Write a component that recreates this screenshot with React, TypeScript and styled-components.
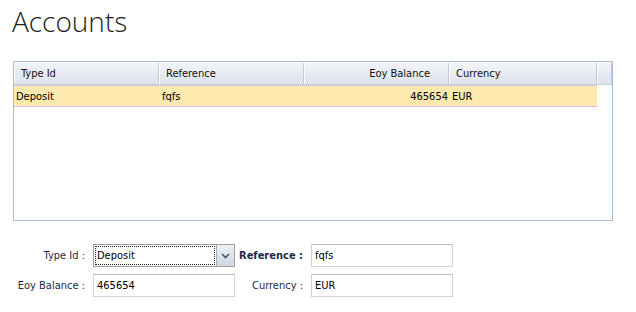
import React from "react";
import styled, { createGlobalStyle } from "styled-components";

const Global = createGlobalStyle`
  html, body { margin: 0; padding: 0; background: #fff; }
  body { font-family: "DejaVu Sans Condensed", "Liberation Sans", Arial, sans-serif; font-stretch: condensed; font-size: 11px; color: #000; }
`;

const Page = styled.div`
  width: 636px;
  height: 312px;
  padding: 0 0 0 13px;
  box-sizing: border-box;
`;

const Title = styled.h1`
  margin: 0;
  padding: 3px 0 0 0;
  margin-left: -1px;
  height: 61px;
  box-sizing: border-box;
  font-family: "Open Sans", sans-serif;
  font-stretch: normal;
  font-weight: 300;
  font-size: 28px;
  line-height: 36px;
  color: #222;
`;

const Grid = styled.div`
  width: 600px;
  height: 160px;
  box-sizing: border-box;
  border: 1px solid #a9bcd7;
  display: flex;
  flex-direction: column;
`;

const HeaderRow = styled.div`
  display: flex;
  height: 23px;
  border-top: 1px solid #fff;
  box-sizing: border-box;
`;

const HeadCell = styled.div<{ $w: number; $right?: boolean }>`
  flex: 0 0 ${(p) => p.$w}px;
  width: ${(p) => p.$w}px;
  box-sizing: border-box;
  padding: 0 ${(p) => (p.$right ? 18 : 6)}px 0 6px;
  display: flex;
  align-items: center;
  justify-content: ${(p) => (p.$right ? "flex-end" : "flex-start")};
  background: linear-gradient(#f2f4f8, #dde2ec);
  border-right: 1px solid #c5cad6;
  border-left: 1px solid #fbfcfd;
  border-bottom: 1px solid #c8cdd8;
  color: #111;
  overflow: hidden;
`;

const DataRow = styled.div`
  display: flex;
  width: 583px;
  height: 22px;
  background: #fde8ae;
  border-top: 1px dotted #a7b3c9;
  border-bottom: 1px dotted #a7b3c9;
  box-sizing: border-box;
`;

const Cell = styled.div<{ $w: number; $right?: boolean; $pl?: number }>`
  flex: 0 0 ${(p) => p.$w}px;
  box-sizing: border-box;
  padding: 0 2px 0 ${(p) => p.$pl ?? 2}px;
  display: flex;
  align-items: center;
  justify-content: ${(p) => (p.$right ? "flex-end" : "flex-start")};
  color: #000;
`;

const Form = styled.div`
  display: grid;
  grid-template-columns: 72px 142px 60px 142px;
  grid-template-rows: 23px 23px;
  column-gap: 8px;
  row-gap: 7px;
  margin-top: 23px;
`;

const Label = styled.label<{ $bold?: boolean }>`
  display: flex;
  align-items: center;
  justify-content: flex-end;
  color: #1c2a4a;
  font-weight: ${(p) => (p.$bold ? "bold" : "normal")};
  white-space: nowrap;
`;

const Input = styled.div`
  height: 23px;
  box-sizing: border-box;
  border: 1px solid #d3d3d3;
  border-top-color: #bdbdbd;
  padding: 0 3px;
  display: flex;
  align-items: center;
  color: #000;
`;

const Select = styled.div`
  height: 23px;
  box-sizing: border-box;
  display: flex;
  border: 1px solid #a0a0a0;
`;

const SelectText = styled.div`
  flex: 1;
  margin: 1px;
  border: 1px dotted #222;
  background: #fff;
  display: flex;
  align-items: center;
  padding-left: 1px;
  color: #000;
`;

const SelectBtn = styled.div`
  width: 17px;
  background: linear-gradient(#eef1f6, #cfd6e2);
  border-left: 1px solid #a5acb8;
  display: flex;
  align-items: center;
  justify-content: center;
`;

export default function App() {
  return (
    <>
      <Global />
      <Page>
        <Title>Accounts</Title>
        <Grid>
          <HeaderRow>
            <HeadCell $w={145}>Type Id</HeadCell>
            <HeadCell $w={145}>Reference</HeadCell>
            <HeadCell $w={145} $right>Eoy Balance</HeadCell>
            <HeadCell $w={148}>Currency</HeadCell>
            <HeadCell $w={15} />
          </HeaderRow>
          <DataRow>
            <Cell $w={145}>Deposit</Cell>
            <Cell $w={145} $pl={3}>fqfs</Cell>
            <Cell $w={146} $right>465654</Cell>
            <Cell $w={147} $pl={2}>EUR</Cell>
          </DataRow>
        </Grid>
        <Form>
          <Label>Type Id :</Label>
          <Select>
            <SelectText>Deposit</SelectText>
            <SelectBtn>
              <svg width="9" height="6" viewBox="0 0 9 6">
                <path d="M1 1 L4.5 4.5 L8 1" stroke="#4a5670" strokeWidth="1.6" fill="none" />
              </svg>
            </SelectBtn>
          </Select>
          <Label $bold>Reference :</Label>
          <Input>fqfs</Input>
          <Label>Eoy Balance :</Label>
          <Input>465654</Input>
          <Label>Currency :</Label>
          <Input>EUR</Input>
        </Form>
      </Page>
    </>
  );
}
